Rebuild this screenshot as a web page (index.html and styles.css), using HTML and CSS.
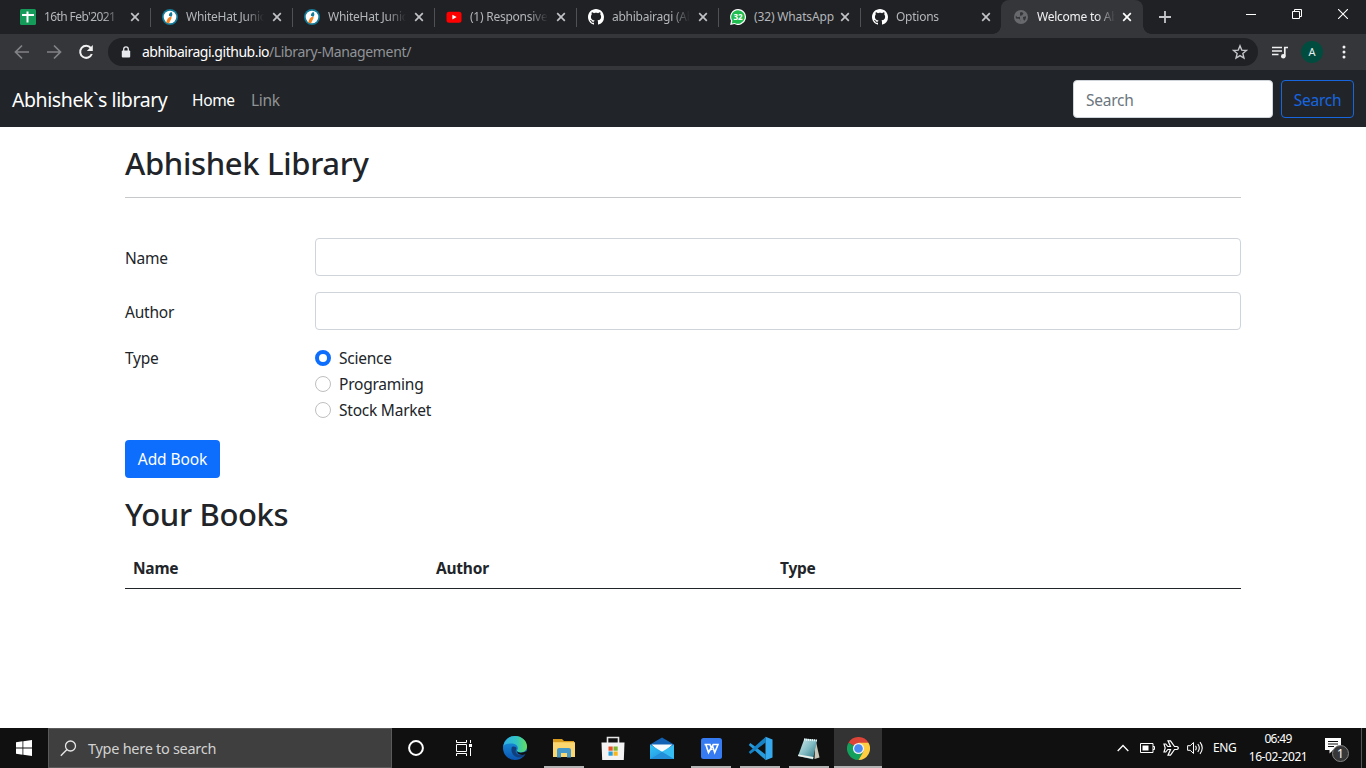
FILE: index.html
```html
<!DOCTYPE html>
<html lang="en">
<head>
<meta charset="utf-8">
<title>Welcome to Abhishek Library</title>
<link rel="stylesheet" href="styles.css">
</head>
<body>
<svg class="defs" width="0" height="0">
  <defs>
    <linearGradient id="edgeA" x1="0" y1="0" x2="1" y2="0"><stop offset="0" stop-color="#2faee8"/><stop offset=".55" stop-color="#32c4c4"/><stop offset="1" stop-color="#62e05c"/></linearGradient>
    <linearGradient id="edgeB" x1="0" y1="0" x2="0" y2="1"><stop offset="0" stop-color="#1c9de4"/><stop offset="1" stop-color="#0b54b0"/></linearGradient>
    <linearGradient id="mailA" x1="0" y1="0" x2="1" y2="1"><stop offset="0" stop-color="#35c6f7"/><stop offset="1" stop-color="#1c87d8"/></linearGradient>
    <linearGradient id="noteA" x1="0" y1="0" x2="1" y2="1"><stop offset="0" stop-color="#d6eef0"/><stop offset=".5" stop-color="#83bcc4"/><stop offset="1" stop-color="#1f6d7c"/></linearGradient>
    <symbol id="x" viewBox="0 0 10 10"><path d="M1.200 1.200l7.600 7.600M8.800 1.200L1.200 8.800" fill="none" stroke="currentColor" stroke-width="1.700"/></symbol>
    <symbol id="whitehat" viewBox="0 0 16 16"><circle cx="8" cy="8" r="8" fill="#137b98"/><circle cx="8" cy="8" r="6.300" fill="#fff"/><path d="M8.800 7.500C6.600 8 4.800 10 4.300 13.600l2.600.8 2.800-5.600z" fill="#f5821f"/><path d="M9.500 3C7.700 3.500 6.800 5 6.900 6.800l2.500.9c1.200-1.200 1.300-3.200.1-4.700z" fill="#137b98"/></symbol>
    <symbol id="github" viewBox="0 0 16 16"><path fill="#fff" d="M8 0C3.580 0 0 3.580 0 8c0 3.540 2.290 6.530 5.470 7.590.4.070.55-.17.55-.38 0-.19-.01-.82-.01-1.490-2.010.37-2.530-.49-2.690-.94-.09-.23-.48-.94-.82-1.130-.28-.15-.68-.52-.01-.53.63-.01 1.080.58 1.230.82.72 1.210 1.870.87 2.330.66.07-.52.28-.87.51-1.070-1.780-.2-3.640-.89-3.640-3.950 0-.87.31-1.590.82-2.150-.08-.2-.36-1.020.08-2.120 0 0 .67-.21 2.200.82.64-.18 1.320-.27 2-.27s1.360.09 2 .27c1.530-1.040 2.200-.82 2.200-.82.44 1.100.16 1.920.08 2.120.51.56.82 1.270.82 2.150 0 3.070-1.870 3.750-3.650 3.950.29.25.54.73.54 1.480 0 1.070-.01 1.930-.01 2.200 0 .21.15.46.55.38A8 8 0 0 0 16 8c0-4.420-3.580-8-8-8z"/></symbol>
  </defs>
</svg>

<header class="tabs">
  <div class="tab"><svg class="fav" viewBox="0 0 16 16"><rect width="16" height="16" rx="1.500" fill="#149b5a"/><path d="M2 6h12M7.500 2.500v11" stroke="#fff" stroke-width="2"/></svg><span class="title tight">16th Feb'2021</span><svg class="close"><use href="#x"/></svg></div>
  <div class="tab"><svg class="fav"><use href="#whitehat"/></svg><span class="title">WhiteHat Junior</span><svg class="close"><use href="#x"/></svg></div>
  <div class="tab"><svg class="fav"><use href="#whitehat"/></svg><span class="title">WhiteHat Junior</span><svg class="close"><use href="#x"/></svg></div>
  <div class="tab"><svg class="fav" viewBox="0 0 16 16"><rect x=".5" y="2.700" width="15" height="11" rx="2.500" fill="#f00"/><path d="M6.400 5.700v4.800L10.600 8.100z" fill="#fff"/></svg><span class="title">(1) Responsive</span><svg class="close"><use href="#x"/></svg></div>
  <div class="tab"><svg class="fav"><use href="#github"/></svg><span class="title">abhibairagi (Abhi</span><svg class="close"><use href="#x"/></svg></div>
  <div class="tab"><svg class="fav" viewBox="0 0 16 16"><path d="M8 0a8 8 0 1 1-3.700 15.100L.2 16l.8-4.300A8 8 0 0 1 8 0z" fill="#fff"/><path d="M8 1.200a6.800 6.800 0 1 1-3.400 12.700l-2.800.6.600-2.700A6.800 6.800 0 0 1 8 1.200z" fill="#1fbd50"/><text x="8.100" y="10.900" class="wa">32</text></svg><span class="title nofade">(32) WhatsApp</span><svg class="close"><use href="#x"/></svg></div>
  <div class="tab last"><svg class="fav"><use href="#github"/></svg><span class="title">Options</span><svg class="close"><use href="#x"/></svg></div>
  <div class="tab active"><svg class="fav" viewBox="0 0 16 16"><circle cx="8" cy="8" r="7" fill="#67696d"/><path d="M7 3.500L9 3l1.500 1.500L9 6.500H7.500L6.500 8H4L3 6.500C2.600 7.500 2.600 8.500 3 9.500l3 .3 1.300 1.200-.3 2.300M10 8l3-.8c.2 2-.5 3.500-1.800 4.600L10.200 10z" fill="#35363a"/></svg><span class="title">Welcome to Abhi</span><svg class="close"><use href="#x"/></svg></div>
  <svg class="newtab" viewBox="0 0 12 12"><path d="M6 0v12M0 6h12" stroke="#c5c6c9" stroke-width="1.800"/></svg>
  <div class="wincontrols">
    <svg width="10" height="10"><path d="M0 5.500h10" stroke="#fff"/></svg>
    <svg width="10" height="10"><path d="M.5 2.500h7v7h-7zM2.500 2.500v-2h7v7h-2" fill="none" stroke="#fff"/></svg>
    <svg width="10" height="10"><path d="M0 0l10 10M10 0L0 10" stroke="#fff" stroke-width="1.100"/></svg>
  </div>
</header>

<div class="toolbar">
  <svg class="nav" viewBox="0 0 16 16"><path d="M15 8H2M8 1.500L1.500 8 8 14.500" fill="none" stroke="#828386" stroke-width="1.700"/></svg>
  <svg class="nav" viewBox="0 0 16 16"><path d="M1 8h13M8 1.500L14.500 8 8 14.500" fill="none" stroke="#828386" stroke-width="1.700"/></svg>
  <svg class="nav" viewBox="0 0 16 16"><path d="M12.800 4A6 6 0 1 0 13.800 10" fill="none" stroke="#f1f1f2" stroke-width="2"/><path d="M14.800 1v6H8.800z" fill="#f1f1f2"/></svg>
  <div class="omnibox">
    <svg class="lock" viewBox="0 0 10 12"><path d="M2.700 5V3.200a2.300 2.300 0 0 1 4.600 0V5" fill="none" stroke="#e8eaed" stroke-width="1.300"/><rect x=".8" y="4.500" width="8.400" height="7" rx="1" fill="#e8eaed"/></svg>
    <span class="url"><b>abhibairagi.github.io</b><i>/Library-Management/</i></span>
    <svg class="star" viewBox="0 0 16 16"><path d="M8 1.800l1.750 4.300 4.650.35-3.550 3 1.100 4.550L8 11.550 4.050 14l1.100-4.550-3.550-3 4.650-.35z" fill="none" stroke="#c5c6c9" stroke-width="1.400"/></svg>
  </div>
  <svg class="media" viewBox="0 0 16 13"><path d="M0 1.500h10M0 5h10M0 8.500h6.500" stroke="#f1f1f2" stroke-width="1.600"/><path d="M12.800 10V1.500H16" fill="none" stroke="#f1f1f2" stroke-width="1.700"/><circle cx="11.300" cy="10.200" r="2.300" fill="#f1f1f2"/></svg>
  <span class="avatar">A</span>
  <svg class="dots" viewBox="0 0 4 14"><circle cx="2" cy="2" r="1.500"/><circle cx="2" cy="7" r="1.500"/><circle cx="2" cy="12" r="1.500"/></svg>
</div>

<nav class="navbar">
  <a class="brand">Abhishek`s library</a>
  <a class="link on">Home</a>
  <a class="link">Link</a>
  <input class="search" type="text" placeholder="Search">
  <button class="outline">Search</button>
</nav>

<main class="page">
  <h1 class="h1a">Abhishek Library</h1>
  <hr>
  <div class="row"><label>Name</label><input type="text" class="field"></div>
  <div class="row"><label>Author</label><input type="text" class="field"></div>
  <div class="row types"><label>Type</label>
    <div class="radios">
      <div class="radio"><span class="dot checked"></span><span>Science</span></div>
      <div class="radio"><span class="dot"></span><span>Programing</span></div>
      <div class="radio"><span class="dot"></span><span>Stock Market</span></div>
    </div>
  </div>
  <button class="primary">Add Book</button>
  <h1 class="h1b">Your Books</h1>
  <div class="thead"><span>Name</span><span>Author</span><span>Type</span></div>
</main>

<footer class="taskbar">
  <div class="start"><svg width="16" height="16" viewBox="0 0 16 16"><path d="M0 2.200L6.500 1.300V7.600H0zM7.300 1.200L16 0v7.600H7.300zM0 8.400h6.500v6.300L0 13.800zM7.300 8.400H16V16l-8.700-1.200z" fill="#fff"/></svg></div>
  <div class="tsearch"><svg width="17" height="17" viewBox="0 0 17 17"><circle cx="10.500" cy="6" r="5" fill="none" stroke="#e6e6e6" stroke-width="1.300"/><path d="M7 9.500L.8 15.800" stroke="#e6e6e6" stroke-width="1.400"/></svg><span>Type here to search</span></div>
  <div class="apps">
    <div class="app"><svg width="16" height="16" viewBox="0 0 16 16"><circle cx="8" cy="8" r="6.900" fill="none" stroke="#fff" stroke-width="2"/></svg></div>
    <div class="app taskview"><svg width="16" height="16" viewBox="0 0 16 16"><path d="M.5 0v2.500h10V0M.5 16v-2.500h10V16M.5 4.500h10v7H.5zM14.500 0v3M14.500 8v8" fill="none" stroke="#fff"/><rect x="13" y="4" width="3" height="3" fill="#fff"/></svg></div>
    <div class="app"><svg width="24" height="24" viewBox="0 0 24 24"><circle cx="12" cy="12" r="12" fill="url(#edgeB)"/><path d="M.3 10C1.500 4 6.200 0 12 0c7 0 12 5 12 10.600 0 3.500-2.800 5.900-6.200 5.900-2.600 0-4-.9-4-1.700 0-.6 1-1 1-2.800 0-2.300-2.400-4.500-6.200-4.500C4.500 7.500 1.500 8.500.3 10z" fill="url(#edgeA)"/><path d="M8.700 11.500c-1.500 5 2.700 11 9 9.700 2-.4 3.700-1.700 4.600-3-3.800 1.800-8.500.8-9.500-2-.6-1.600.4-2.400.6-3.700-.2-2-3.900-2.600-4.700-1z" fill="#123e7c"/><path d="M13.700 14c.2 3 5.200 3.700 9.300 1.300l2 .2-1 1.200-1.700 1.500c-3.800 1.800-8.500.2-8.600-4.200z" fill="#101010"/></svg></div>
    <div class="app run"><svg width="22" height="19" viewBox="0 0 22 19"><path d="M0 0h9l2 2h10v4H0z" fill="#d99b1c"/><path d="M0 3.200h22V18H0z" fill="#fbd66e"/><path d="M4 18.500V11q0-2 2-2h10q2 0 2 2v7.500h-4V14H8v4.500z" fill="#4498c9"/></svg></div>
    <div class="app"><svg width="24" height="24" viewBox="0 0 24 24"><path d="M6.500 7V1.500h11V7" fill="none" stroke="#e6e6e6" stroke-width="1.600"/><path d="M.5 6.500h23L22.800 24H1.200z" fill="#f3f3f3"/><path d="M7.500 10.500h4.200v4.200H7.500z" fill="#e8502a"/><path d="M12.500 10.500h4.200v4.200h-4.200z" fill="#7bb62c"/><path d="M7.500 15.500h4.200v4.200H7.500z" fill="#25a0dc"/><path d="M12.500 15.500h4.200v4.200h-4.200z" fill="#f9b51c"/></svg></div>
    <div class="app"><svg width="24" height="23" viewBox="0 0 24 23"><path d="M0 7.500L12 .5l12 7V22H0z" fill="#1160b3"/><path d="M1.500 7.500h21L12 17z" fill="#f7fafc"/><path d="M0 7.500L24 22H0z" fill="url(#mailA)"/><path d="M24 7.500V22H0z" fill="#36bdf3"/><path d="M12 14.800L24 22H0z" fill="#238fda"/></svg></div>
    <div class="app run"><svg width="21" height="21" viewBox="0 0 21 21"><rect width="21" height="21" rx="2.500" fill="#367bf1"/><path d="M3.500 6.500H9L11 12M4.800 6.500L7.500 14.500l4.700-8H17L13.700 14.500 11.500 8" fill="none" stroke="#fff" stroke-width="1.600"/></svg></div>
    <div class="app run"><svg width="25" height="25" viewBox="0 0 25 25"><path d="M2.300 7L17.500 18.500V24L.8 9z" fill="#259bdd"/><path d="M2.300 18L17.500 6.500V1L.8 16z" fill="#1682c5"/><path d="M17.500.8L24.500 3.500v18l-7 2.700z" fill="#36a9ee"/></svg></div>
    <div class="app run"><svg width="24" height="23" viewBox="0 0 24 23"><path d="M18.500 2.500l4 18-5 1.500z" fill="#c9c6b8"/><path d="M7.500 1.500L20 3l-4 19.500L1 19z" fill="url(#noteA)"/><path d="M7 2.500L20 3.500" stroke="#e9f4f5" stroke-width="2" stroke-dasharray="1.200 .8"/><path d="M16 22L1 19l.5-1.500L16.500 20z" fill="#eef1ed"/></svg></div>
    <div class="app run current"><svg width="23" height="23" viewBox="0 0 24 24"><path d="M12 12L1.600 6A12 12 0 0 1 22.400 6z" fill="#db4437"/><path d="M12 12L1.600 6A12 12 0 0 0 12 24l5.200-9z" fill="#12a05c"/><path d="M17.200 15L12 24A12 12 0 0 0 22.400 6H12v6z" fill="#ffcd42"/><circle cx="12" cy="12" r="5.800" fill="#f3f3f3"/><circle cx="12" cy="12" r="4.500" fill="#4a8af4"/></svg></div>
  </div>
  <div class="tray">
    <svg width="12" height="8" viewBox="0 0 12 8"><path d="M.7 7L6 1.500 11.300 7" fill="none" stroke="#fff" stroke-width="1.300"/></svg>
    <svg class="bat" width="15" height="10" viewBox="0 0 15 10"><path d="M.5 .5h12.500v9H.5zM13 3.500h1.500v3H13" fill="none" stroke="#fff"/><path d="M2.500 2.500h6v5h-6z" fill="#fff"/></svg>
    <svg class="plane" width="16" height="16" viewBox="0 0 16 16"><path d="M1 4h1.800l2 2.500H7.500L5 .8h2.500l4 5.700h2.500c1.800.6 1.800 2.400 0 3h-2.500l-4 5.700H5l2.500-5.700H4.800L2.800 12H1l1.200-4z" fill="none" stroke="#fff" stroke-width="1.200"/></svg>
    <svg class="vol" width="17" height="14" viewBox="0 0 17 14"><path d="M.6 4.700h2.600L6.500 1.500v11L3.200 9.300H.6z" fill="none" stroke="#fff"/><path d="M8.500 4.800q1.500 2.200 0 4.400M10.800 3q3 4 0 8M13 1.200q4.500 5.800 0 11.600" fill="none" stroke="#fff" stroke-width="1.100"/></svg>
    <span class="lang">ENG</span>
    <div class="clock"><span class="time">06:49</span><span class="date">16-02-2021</span></div>
    <svg class="notif" width="26" height="26" viewBox="0 0 26 26"><path d="M1 2h16v12H9l-3.500 3.500V14H1z" fill="#fff"/><path d="M4 5.500h10M4 8h10M4 10.500h6" stroke="#111"/><circle cx="16.500" cy="17.500" r="8" fill="#373737" stroke="#858585"/><text x="16.500" y="22" class="cnt">1</text></svg>
    <span class="peek"></span>
  </div>
</footer>
</body>
</html>
```
FILE: styles.css
```css
* { box-sizing: border-box; }
html, body { margin: 0; width: 1366px; height: 768px; overflow: hidden; }
body { display: flex; flex-direction: column; background: #fff; color: #212529; font: 15.5px/24px "Noto Sans", "Open Sans", sans-serif; letter-spacing: -0.23px; }
svg { display: block; flex: none; }
.defs { position: absolute; }
input, button { font: inherit; letter-spacing: inherit; margin: 0; }

.tabs { flex: none; height: 34px; display: flex; background: #202124; padding-left: 8px; }
.tab { position: relative; flex: none; width: 142px; height: 34px; display: flex; align-items: center; padding: 0 10px 0 12px; color: #b3b6ba; font-size: 12px; letter-spacing: -0.25px; }
.tab:not(.last):not(.active)::after { content: ""; position: absolute; right: -1px; top: 8px; width: 1px; height: 19px; background: #505154; }
.fav { width: 16px; height: 16px; margin-right: 8px; }
.title { width: 78px; height: 24px; line-height: 24px; margin-right: 8px; overflow: hidden; white-space: nowrap; -webkit-mask-image: linear-gradient(90deg, #000 76%, transparent 100%); mask-image: linear-gradient(90deg, #000 76%, transparent 100%); }
.tight { letter-spacing: -0.6px; }
.nofade { width: 80px; margin-right: 6px; letter-spacing: -0.15px; -webkit-mask: none; mask: none; }
.close { width: 10px; height: 10px; color: #c0c2c5; }
.tab.last { width: 141px; }
.active { background: #35363a; border-radius: 8px 8px 0 0; color: #f1f1f2; }
.active .title { margin-right: 7px; }
.active .close { color: #fff; }
.active::before { content: ""; position: absolute; left: -8px; right: -8px; bottom: 0; height: 8px; background: radial-gradient(circle at 0 0, transparent 7.5px, #35363a 8px) left / 8px 8px no-repeat, radial-gradient(circle at 100% 0, transparent 7.5px, #35363a 8px) right / 8px 8px no-repeat; }
.wa { font: bold 8px "Noto Sans", sans-serif; fill: #fff; text-anchor: middle; letter-spacing: 0; }
.newtab { width: 12px; height: 12px; margin: 11px 0 0 16px; }
.wincontrols { display: flex; gap: 36px; margin: 9px 0 0 auto; padding-right: 18px; }

.toolbar { flex: none; height: 36px; background: #35363a; display: flex; align-items: center; padding-left: 14px; }
.nav { width: 16px; height: 16px; margin-right: 16px; }
.nav:nth-child(3) { margin-right: 14px; }
.omnibox { width: 1150px; height: 28px; background: #202124; border-radius: 14px; display: flex; align-items: center; padding: 0 10px 0 13px; }
.lock { width: 10px; height: 12px; margin-right: 11px; }
.url { font-size: 14px; letter-spacing: -0.3px; color: #fff; white-space: nowrap; }
.url b { font-weight: 400; letter-spacing: -0.5px; }
.url b { display: inline-block; width: 127px; letter-spacing: -0.48px; }
.url i { font-style: normal; color: #909398; letter-spacing: -0.35px; }
.star { width: 16px; height: 16px; margin-left: auto; }
.media { width: 16px; height: 13px; margin-left: 14px; }
.avatar { width: 22px; height: 22px; margin-left: 13px; border-radius: 50%; background: #004d40; color: #e8f0ef; font-size: 11px; line-height: 22px; text-align: center; letter-spacing: 0; }
.dots { width: 4px; height: 14px; margin-left: 19px; fill: #f1f1f2; }

.navbar { flex: none; height: 57px; background: #212529; display: flex; align-items: center; padding: 1px 12px 0; }
.brand { width: 180px; padding-top: 1px; color: #fff; font-size: 19.5px; line-height: 30px; letter-spacing: -0.42px; white-space: nowrap; }
.link { width: 59px; color: #909294; padding-top: 1px; letter-spacing: -0.35px; }
.link.on { color: #fff; }
.search { width: 200px; height: 38px; margin-left: auto; border: 1px solid #ced4da; border-radius: 4px; padding: 1px 12px 0; }
.search::placeholder { color: #6c757d; opacity: 1; }
.outline { width: 73px; height: 38px; margin-left: 8px; padding: 1px 0 0; background: none; border: 1px solid #1766e0; border-radius: 4px; color: #1766e0; }

.page { flex: 1; width: 1116px; margin-left: 125px; }
h1 { font-size: 31px; line-height: 38px; font-weight: 500; letter-spacing: -0.33px; }
.h1a { margin: 17px 0 15px; }
hr { margin: 0 0 40px; border: 0; height: 1px; background: #c7c8c9; }
.row { display: flex; align-items: center; margin-bottom: 16px; }
.row label { width: 190px; padding-top: 1px; }
.field { width: 926px; height: 38px; border: 1px solid #ced4da; border-radius: 4px; padding: 0 12px; }
.types label { padding-top: 0; }
.types { align-items: flex-start; }
.radio { height: 26px; display: flex; align-items: center; gap: 8px; padding-bottom: 2px; }
.dot { width: 16px; height: 16px; border: 1px solid #bfbfbf; border-radius: 50%; }
.dot.checked { border: 4.5px solid #0d6efd; }
.primary { display: block; width: 95px; height: 38px; padding: 0; border: 0; border-radius: 4px; background: #0d6efd; color: #fff; letter-spacing: -0.1px; }
.h1b { margin: 17px 0 23px; }
.thead { display: flex; height: 33px; padding-left: 8px; border-bottom: 1px solid #212529; font-weight: 700; }
.thead span:first-child { width: 303px; }
.thead span:nth-child(2) { width: 344px; }

.taskbar { flex: none; height: 40px; background: #101010; display: flex; color: #fff; }
.start { width: 48px; display: flex; align-items: center; justify-content: center; }
.tsearch { width: 344px; border: 1px solid #5a5a5a; background: #3f3f3f; display: flex; align-items: center; padding-left: 11px; gap: 11px; color: #d2d2d2; font-size: 14.5px; letter-spacing: -0.28px; }
.apps { display: flex; gap: 1px; }
.app { position: relative; width: 48px; display: flex; align-items: center; justify-content: center; }
.taskview { margin: 0 2px 0 -1px; }
.run::after { content: ""; position: absolute; left: 4px; right: 4px; bottom: 0; height: 2px; background: #b3b3b3; }
.current { background: #333; }
.current::after { left: 0; right: 0; }
.tray { flex: 1; display: flex; align-items: center; justify-content: flex-end; }
.bat { margin-left: 11px; }
.plane { margin-left: 8px; }
.vol { margin-left: 8px; }
.lang { margin-left: 9px; width: 36px; font-size: 12px; letter-spacing: -0.4px; }
.clock { width: 58px; display: flex; flex-direction: column; align-items: center; font-size: 12px; line-height: 18px; letter-spacing: -0.4px; white-space: nowrap; padding-bottom: 1px; }
.time { letter-spacing: -0.7px; }
.notif { margin: 1px 0 0 17px; }
.cnt { font: 12px "Noto Sans", sans-serif; fill: #fff; text-anchor: middle; letter-spacing: 0; }
.peek { width: 1px; height: 40px; margin: 0 4px 0 11px; background: #555; }
```
